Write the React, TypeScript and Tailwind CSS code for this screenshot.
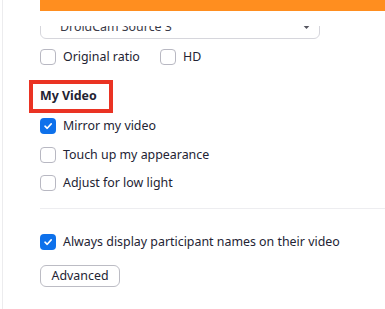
function Box({ checked }: { checked?: boolean }) {
  if (checked) {
    return (
      <span className="w-4 h-4 rounded-[4px] bg-[#0e71eb] flex items-center justify-center shrink-0">
        <svg width="10" height="10" viewBox="0 0 10 10" fill="none">
          <path d="M2 5.2 4.2 7.3 8.2 2.9" stroke="#fff" strokeWidth="1.6" strokeLinecap="round" strokeLinejoin="round" />
        </svg>
      </span>
    );
  }
  return <span className="w-4 h-4 rounded-[4px] border border-[#b8b8c2] bg-white shrink-0" />;
}

function Check({ label, checked }: { label: string; checked?: boolean }) {
  return (
    <label className="flex items-center gap-[7px] h-4 text-[12.4px] text-[#232333] leading-none">
      <Box checked={checked} />
      <span>{label}</span>
    </label>
  );
}

export default function App() {
  return (
    <div className="w-[385px] h-[309px] bg-white overflow-hidden pl-[2px] font-['Noto_Sans',sans-serif]">
      <div className="h-full border-l border-[#ececee] pl-[37px]">
        <div className="h-[11px] bg-[#ff8e1f]" />

        {/* dropdown scrolled under the header, only its lower half shows */}
        <div className="mt-[15px] h-[13px] overflow-hidden">
          <div className="-mt-[11px] h-[24px] w-[280px] border border-[#d6d6dc] rounded-[6px] flex items-center justify-between pl-[19px] pr-[9px] text-[12.4px] text-[#3a3a48]">
            <span>DroidCam Source 3</span>
            <svg width="7" height="5" viewBox="0 0 7 5">
              <path d="M0.5 0.8 3.5 4 6.5 0.8Z" fill="#55555f" />
            </svg>
          </div>
        </div>

        <div className="mt-[10px] flex items-center">
          <div className="w-[120px]">
            <Check label="Original ratio" />
          </div>
          <Check label="HD" />
        </div>

        <div className="mt-[15px] -ml-[11px] w-[84px] h-[33px] border-[4px] border-[#ea3323] flex items-center pl-[7px]">
          <span className="text-[12.4px] font-bold text-[#232333] leading-none">My Video</span>
        </div>

        <div className="mt-[5px] flex flex-col">
          <Check label="Mirror my video" checked />
          <div className="mt-[13px]">
            <Check label="Touch up my appearance" />
          </div>
          <div className="mt-[12px]">
            <Check label="Adjust for low light" />
          </div>
        </div>

        <div className="mt-[17px] h-px bg-[#ededf0]" />

        <div className="mt-[25px]">
          <Check label="Always display participant names on their video" checked />
        </div>

        <button className="mt-[15px] w-[80px] h-[22px] border border-[#bcbcc4] rounded-[6px] text-[12.4px] text-[#232333] leading-none flex items-center justify-center">
          Advanced
        </button>
      </div>
    </div>
  );
}
